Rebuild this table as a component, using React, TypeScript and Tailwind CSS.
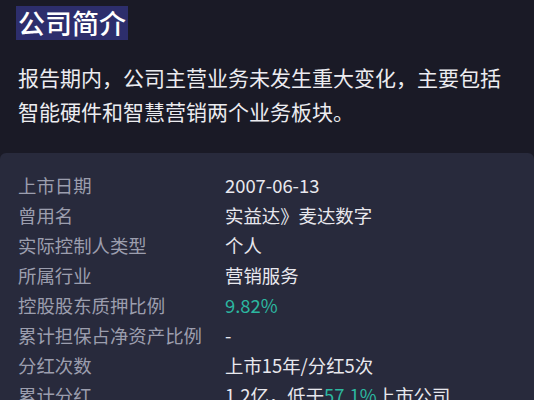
const rows: { label: string; value: React.ReactNode }[] = [
  { label: "上市日期", value: "2007-06-13" },
  { label: "曾用名", value: "实益达》麦达数字" },
  { label: "实际控制人类型", value: "个人" },
  { label: "所属行业", value: "营销服务" },
  { label: "控股股东质押比例", value: <span className="text-[#2cb7a0]">9.82%</span> },
  { label: "累计担保占净资产比例", value: "-" },
  { label: "分红次数", value: "上市15年/分红5次" },
  {
    label: "累计分红",
    value: (
      <>
        1.2亿，低于<span className="text-[#2cb7a0]">57.1%</span>上市公司
      </>
    ),
  },
];

export default function App() {
  return (
    <div
      className="h-[400px] w-[534px] overflow-hidden bg-[#1a1a26]"
      style={{ fontFamily: '"Noto Sans CJK SC", "Noto Sans", sans-serif' }}
    >
      <div className="px-[16px] pt-[6px]">
        <h1 className="inline-block bg-[#2d2e6c] px-[2px] text-[27px] leading-[34px] font-medium text-white">
          公司简介
        </h1>
      </div>
      <p className="px-[18px] pt-[20px] text-[21px] leading-[34px] text-[#ececf0]">
        报告期内，公司主营业务未发生重大变化，主要包括智能硬件和智慧营销两个业务板块。
      </p>
      <div className="mt-[25px] rounded-t-[6px] bg-[#282a3c] px-[18px] pt-[17px]">
        {rows.map((r) => (
          <div key={r.label} className="flex text-[18.4px] leading-[30px]">
            <div className="w-[207px] shrink-0 text-[#9c9eae]">{r.label}</div>
            <div className="whitespace-nowrap text-[#e8e8ee]">{r.value}</div>
          </div>
        ))}
      </div>
    </div>
  );
}
